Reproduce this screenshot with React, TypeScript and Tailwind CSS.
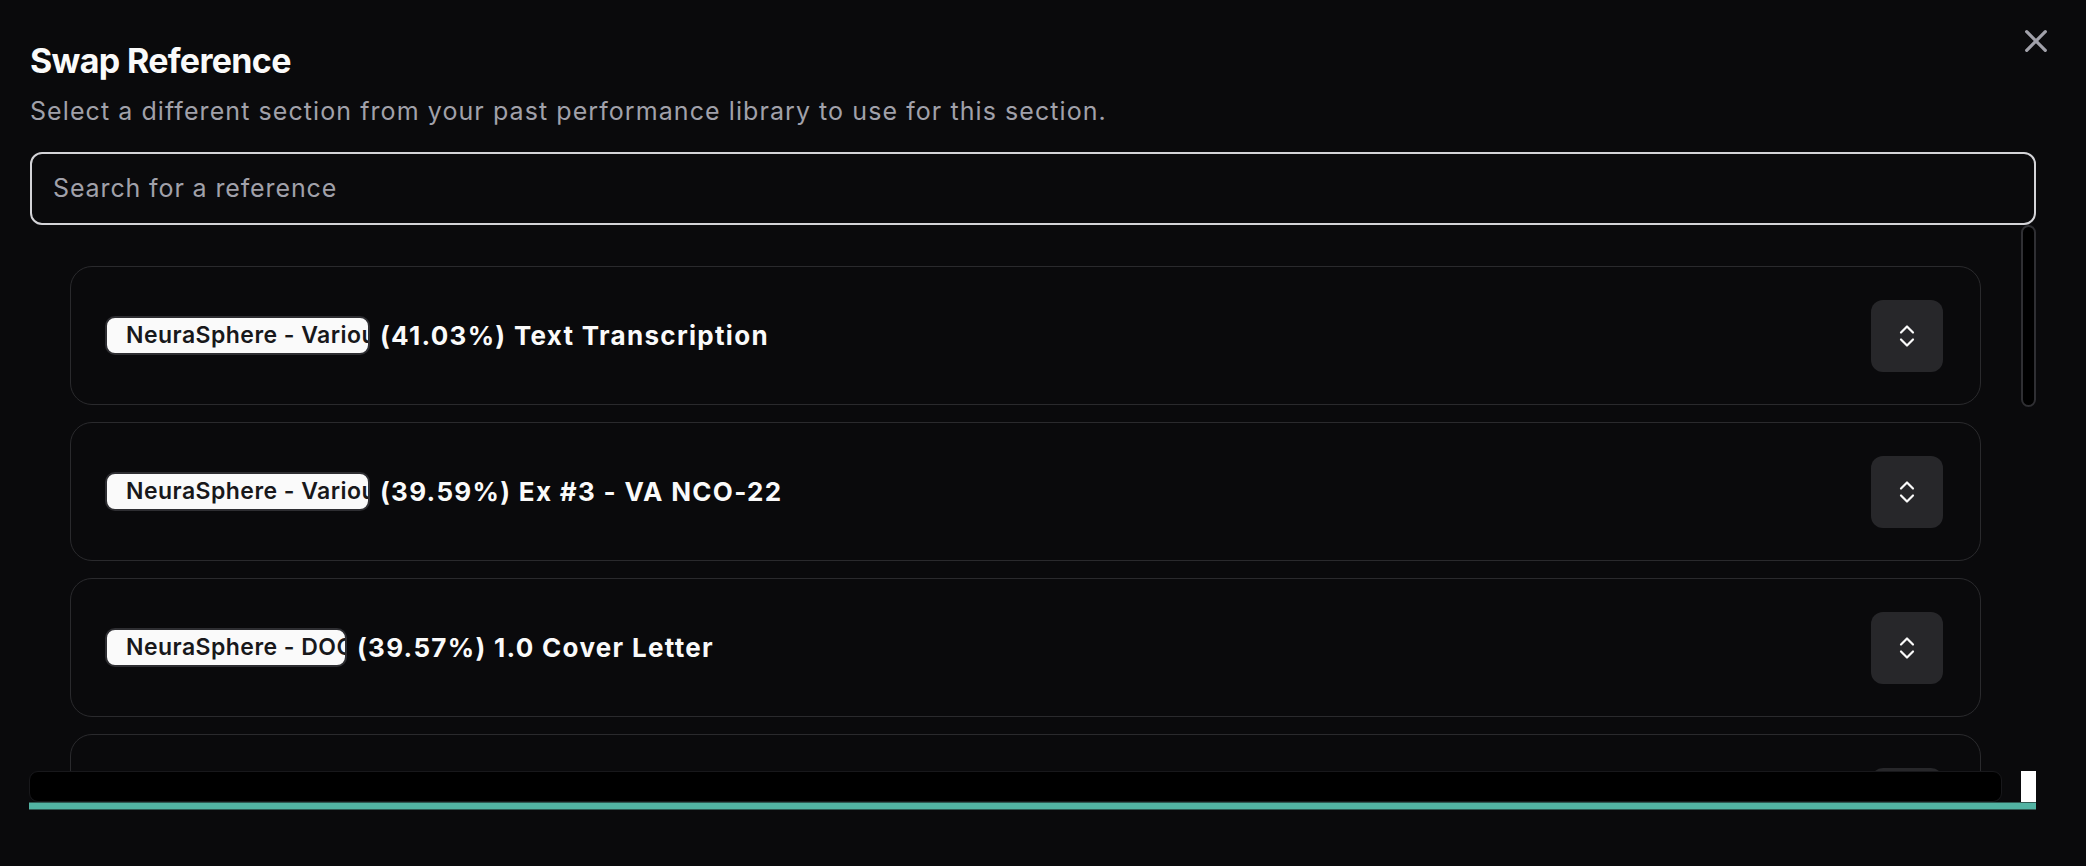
import { X } from "lucide-react";

interface Reference {
  source: string;
  badgeWidth: number;
  score: string;
  title: string;
}

const references: Reference[] = [
  { source: "NeuraSphere - Various Projects", badgeWidth: 265, score: "41.03%", title: "Text Transcription" },
  { source: "NeuraSphere - Various Projects", badgeWidth: 265, score: "39.59%", title: "Ex #3 - VA NCO-22" },
  { source: "NeuraSphere - DOCS Proposal", badgeWidth: 242, score: "39.57%", title: "1.0 Cover Letter" },
  { source: "NeuraSphere - Various Projects", badgeWidth: 265, score: "38.90%", title: "2.1 Technical Approach" },
];

function ChevronsIcon() {
  return (
    <svg width="16" height="24" viewBox="0 0 16 24" fill="none" stroke="#fafafa" strokeWidth="2.2" strokeLinecap="round" strokeLinejoin="round">
      <polyline points="2,8.5 8,2.5 14,8.5" />
      <polyline points="2,15.5 8,21.5 14,15.5" />
    </svg>
  );
}

function ReferenceCard({ item }: { item: Reference }) {
  return (
    <div className="flex h-[139px] shrink-0 items-center justify-between rounded-[22px] border border-[#2a2a2d] pl-[34px] pr-[37px]">
      <div className="flex min-w-0 items-center gap-[10px]">
        <span
          className="block h-[39px] shrink-0 overflow-hidden whitespace-nowrap rounded-[10px] border-2 border-[#2e2e32] bg-[#fafafa] pl-[19px] text-[23px] font-semibold leading-[35px] tracking-[0.02em] text-[#18181b]"
          style={{ width: item.badgeWidth }}
        >
          {item.source}
        </span>
        <span className="whitespace-nowrap text-[26px] font-bold tracking-[0.05em] text-[#fafafa]">
          ({item.score}) {item.title}
        </span>
      </div>
      <button
        type="button"
        className="flex h-[72px] w-[72px] shrink-0 items-center justify-center rounded-[12px] bg-[#27272a]"
        aria-label="Expand"
      >
        <ChevronsIcon />
      </button>
    </div>
  );
}

export default function App() {
  return (
    <div
      className="relative h-[866px] w-full overflow-hidden bg-[#0a0a0c] px-[30px] pt-[40px]"
      style={{ fontFamily: "Inter, 'Noto Sans', sans-serif" }}
    >
      <button
        type="button"
        aria-label="Close"
        className="absolute left-[2024px] top-[29px] text-[#a1a1aa]"
      >
        <X size={24} strokeWidth={2.1} className="h-[24px] w-[24px] scale-[1.55]" />
      </button>

      <div className="w-[2006px]">
        <h2 className="text-[34px] font-bold leading-[41px] tracking-[-0.02em] text-[#fafafa]">
          Swap Reference
        </h2>
        <p className="mt-[14px] text-[25px] leading-[32px] tracking-[0.043em] text-[#a1a1aa]">
          Select a different section from your past performance library to use for this section.
        </p>

        <div className="mt-[25px] flex h-[73px] items-center rounded-[12px] border-2 border-[#d4d4d8] px-[21px]">
          <input
            type="text"
            placeholder="Search for a reference"
            className="w-full bg-transparent text-[25px] tracking-[0.035em] text-[#fafafa] outline-none placeholder:text-[#a1a1aa]"
          />
        </div>

        <div className="flex h-[546px] gap-[40px] overflow-hidden">
          <div className="flex flex-1 flex-col gap-[17px] pl-[40px] pt-[41px]">
            {references.map((item, i) => (
              <ReferenceCard key={i} item={item} />
            ))}
          </div>
          <div className="w-[15px] shrink-0">
            <div className="h-[182px] rounded-full border-2 border-[#2f2f33] bg-black" />
          </div>
        </div>

        <div className="-ml-px flex h-[31px] gap-[19px]">
          <div className="flex-1 rounded-[9px] border border-[#18181b] bg-black" />
          <div className="w-[15px] bg-white" />
        </div>
        <div className="-ml-px h-[8px] border-y border-[#2f5a53] bg-[#52b3a3]" />
      </div>
    </div>
  );
}
